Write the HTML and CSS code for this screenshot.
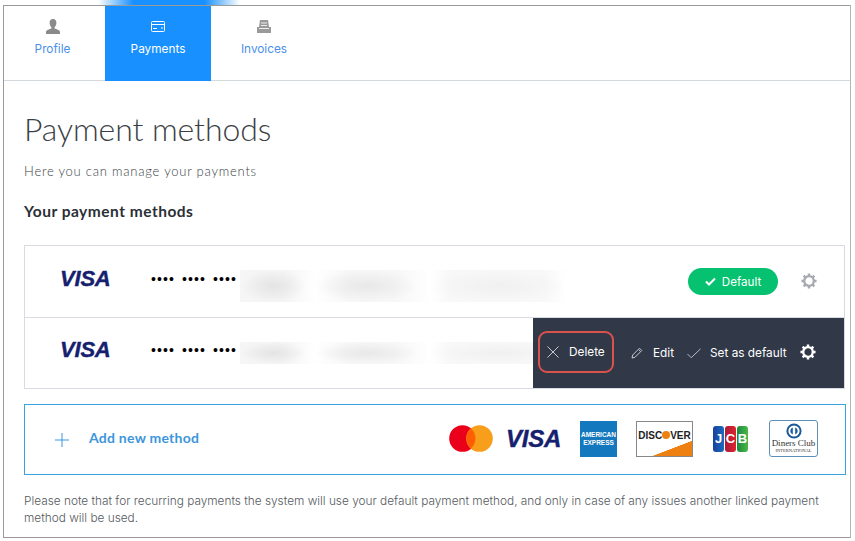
FILE: index.html
```html
<!DOCTYPE html>
<html lang="en">
    <head>
        <title>Payment methods</title>
        <meta charset="utf-8" />
        <link rel="stylesheet" href="styles.css">
    </head>
    <body>
        <div class="glow"></div>
        <div class="frame">
            <div class="tabs">
                <a class="tab first">
                    <svg width="16" height="16" viewBox="0 0 16 16"><path fill="#8a8a8a" d="M8 0c2.200 0 3.400 1.600 3.400 3.800 0 2-1 3.800-1.800 4.500v1.200c2 .8 5.400 1.400 5.400 3.500V15H1v-2c0-2.100 3.400-2.700 5.400-3.500V8.300C5.600 7.600 4.600 5.800 4.600 3.800 4.600 1.600 5.800 0 8 0z"/></svg>
                    Profile
                </a>
                <a class="tab active">
                    <svg width="16" height="16" viewBox="0 0 16 16" fill="none" stroke="#fff"><rect x="1.500" y="2.500" width="13" height="10" rx="1"/><path d="M1.500 5.500h13M3 9.500h4M11 9h2" /></svg>
                    Payments
                </a>
                <a class="tab">
                    <svg width="16" height="16" viewBox="0 0 16 16"><path fill="#9a9a9a" d="M4 1h8l1 7h2v6H1V8h2z"/><path stroke="#eee" d="M5 4h6M5 6.500h6M3 9.500h10"/></svg>
                    Invoices
                </a>
            </div>
            <div class="content">
                <h1>Payment methods</h1>
                <p class="intro">Here you can manage your payments</p>
                <h2>Your payment methods</h2>
                <div class="methods">
                    <div class="method">
                        <span class="visa">VISA</span>
                        <span class="dots">•••• •••• ••••</span>
                        <span class="blurred">
                            <i class="blur b1"></i><i class="blur b2"></i><i class="blur b3"></i>
                        </span>
                        <span class="badge">
                            <svg width="11" height="9" viewBox="0 0 11 9" fill="none" stroke="#fff" stroke-width="2"><path d="M1 4.500l3 3 6-6"/></svg>
                            Default
                        </span>
                        <svg class="gear" width="16" height="16" viewBox="0 0 18 18"><use href="#gear" /></svg>
                    </div>
                    <div class="method">
                        <span class="visa">VISA</span>
                        <span class="dots">•••• •••• ••••</span>
                        <span class="blurred thin">
                            <i class="blur b1"></i><i class="blur b2"></i><i class="blur b3"></i>
                        </span>
                        <div class="actions">
                            <a class="action delete">
                                <svg width="12" height="12" viewBox="0 0 12 12" stroke="#c4c8ce" fill="none"><path d="M.5.500l11 11M11.500.500l-11 11"/></svg>
                                Delete
                            </a>
                            <a class="action edit">
                                <svg width="12" height="12" viewBox="0 0 12 12" stroke="#c4c8ce" fill="none"><path d="M1 11l.7-3L8.500 1.200l2.300 2.300L4 10.300zM7.500 2.500l2 2"/></svg>
                                Edit
                            </a>
                            <a class="action set">
                                <svg width="14" height="11" viewBox="0 0 15 11" stroke="#c4c8ce" fill="none"><path d="M.5 6l4 4L14.500.500"/></svg>
                                Set as default
                            </a>
                            <svg class="gear light" width="16" height="16" viewBox="0 0 18 18"><use href="#gear" /></svg>
                        </div>
                    </div>
                </div>
                <div class="add">
                    <svg class="plus" width="14" height="14" viewBox="0 0 14 14" stroke="#3d95dc"><path d="M7 0v14M0 7h14"/></svg>
                    <span class="add-label">Add new method</span>
                    <div class="cards">
                        <svg width="44" height="27" viewBox="0 0 44 27"><circle cx="13.500" cy="13.500" r="13.300" fill="#eb001b"/><circle cx="30.500" cy="13.500" r="13.300" fill="#f79e1b"/><path fill="#ff5f00" d="M22 3.600a13.300 13.300 0 0 1 0 19.800 13.300 13.300 0 0 1 0-19.800z"/></svg>
                        <span class="visa big">VISA</span>
                        <span class="amex">AMERICAN<br>EXPRESS</span>
                        <span class="discover">DISC<b></b>VER</span>
                        <span class="jcb"><i class="j">J</i><i class="c">C</i><i class="b">B</i></span>
                        <span class="diners">
                            <svg width="16" height="16" viewBox="0 0 20 20"><circle cx="10" cy="10" r="9.500" fill="#1a5a9a"/><circle cx="10" cy="10" r="7" fill="#fff"/><path fill="#1a5a9a" d="M8.500 5.500v9a4.800 4.800 0 0 1 0-9zM11.500 5.500a4.800 4.800 0 0 1 0 9z"/></svg>
                            <em>Diners Club</em>
                            <small>INTERNATIONAL</small>
                        </span>
                    </div>
                </div>
                <p class="note">Please note that for recurring payments the system will use your default payment method, and only in case of any issues another linked payment method will be used.</p>
            </div>
        </div>
        <svg class="defs" width="0" height="0">
            <symbol id="gear" viewBox="0 0 18 18">
                <path fill="none" stroke="currentColor" stroke-width="2.600" d="M9 3.600a5.400 5.400 0 1 0 0 10.800 5.400 5.400 0 0 0 0-10.800z"/>
                <path fill="none" stroke="currentColor" stroke-width="2.800" d="M9 .5v3M9 14.500v3M.5 9h3M14.500 9h3M3 3l2.100 2.100M12.900 12.900L15 15M15 3l-2.100 2.100M5.100 12.900L3 15"/>
            </symbol>
        </svg>
    </body>
</html>
```

FILE: styles.css
```css
html, body {
    margin: 0px;
    padding: 0px;
    height: 541px;
    overflow: hidden;
    background: white;
    font-family: Inter, "Liberation Sans", sans-serif;
    color: #2b2f36;
}
.glow {
    position: absolute;
    top: 0px;
    left: 98px;
    width: 142px;
    height: 5px;
    background: linear-gradient(90deg, #ffffff 0%, #1890ff 25%, #1890ff 75%, #ffffff 100%);
}
.frame {
    position: absolute;
    top: 5px;
    left: 3px;
    width: 848px;
    height: 533px;
    border: 1px solid #9a9a9a;
    border-right-color: #b5b5b5;
    box-sizing: border-box;
}
.tabs {
    display: flex;
    height: 75px;
    border-bottom: 1px solid #d3d9dc;
    box-sizing: border-box;
}
.tab {
    display: flex;
    flex-direction: column;
    align-items: center;
    width: 106px;
    height: 75px;
    padding-top: 13px;
    box-sizing: border-box;
    gap: 7px;
    color: #4a90e8;
    font-size: 11.800px;
}
.first {
    width: 97px;
    margin-right: 4px;
}
.tab svg {
    display: block;
}
.active {
    background: #1890ff;
    color: white;
}
.content {
    padding: 0px 6px 0px 20px;
}
h1 {
    margin: 0px;
    padding-top: 30px;
    line-height: 36px;
    font-family: Lato, sans-serif;
    font-size: 32px;
    font-weight: 300;
    letter-spacing: -0.100px;
    color: #3b3f45;
}
.intro {
    margin: 16px 0px 0px;
    line-height: 16px;
    font-family: Lato, sans-serif;
    font-size: 13px;
    font-weight: 300;
    letter-spacing: 0.770px;
    color: #3b3f45;
}
h2 {
    margin: 24px 0px 0px;
    line-height: 16px;
    font-family: Lato, sans-serif;
    font-size: 15.500px;
    font-weight: 700;
    letter-spacing: 0.500px;
}
.methods {
    margin-top: 26px;
    border: 1px solid #d9dbe3;
    width: 821px;
    box-sizing: border-box;
}
.method {
    position: relative;
    display: flex;
    align-items: center;
    height: 71px;
    padding-left: 35px;
    box-sizing: border-box;
}
.method + .method {
    border-top: 1px solid #d9dbe3;
}
.visa {
    width: 91px;
    margin-top: -6px;
    color: #15206e;
    font-family: "Liberation Sans", sans-serif;
    font-size: 22px;
    font-weight: bold;
    font-style: italic;
    letter-spacing: -0.200px;
    -webkit-text-stroke: 0.4px #15206e;
}
.dots {
    width: 89px;
    margin-top: -6px;
    color: black;
    font-family: "Liberation Sans", sans-serif;
    font-size: 14px;
    letter-spacing: 1.100px;
    word-spacing: 2px;
    white-space: pre;
}
.blurred {
    display: flex;
    flex: none;
    width: 326px;
    height: 32px;
    margin-top: 9px;
}
.thin {
    height: 22px;
    margin-top: 0px;
}
.blur {
    display: block;
    height: 100%;
}
.b1 {
    width: 75px;
    background: radial-gradient(ellipse closest-side at 44% 50%, #e4e4e4, transparent),
        linear-gradient(90deg, #f6f6f6, #f4f4f4 60%, #ffffff);
}
.b2 {
    width: 115px;
    background: radial-gradient(ellipse closest-side at 45% 50%, #e8e8e8, transparent),
        linear-gradient(90deg, #ffffff, #f7f7f7 30%, #f7f7f7 70%, #ffffff);
}
.b3 {
    width: 136px;
    background: radial-gradient(ellipse closest-side, #f0f0f0, transparent),
        linear-gradient(90deg, #ffffff, #f8f8f8 15%, #f8f8f8 85%, #ffffff);
}
.badge {
    position: absolute;
    top: 22px;
    right: 66px;
    display: flex;
    align-items: center;
    justify-content: center;
    gap: 6px;
    width: 90px;
    height: 27px;
    border-radius: 14px;
    background: #06c270;
    color: white;
    font-size: 11.600px;
}
.gear {
    position: absolute;
    top: 27px;
    right: 27px;
    color: #a7abb0;
}
.actions {
    position: absolute;
    top: 0px;
    right: 0px;
    bottom: 0px;
    display: flex;
    align-items: center;
    width: 311px;
    background: #313848;
    color: white;
    font-size: 11.800px;
}
.action {
    display: flex;
    align-items: center;
    gap: 9px;
}
.delete {
    gap: 10px;
    margin: -2px 17px 0px 5px;
    padding: 0px 7px;
    width: 76px;
    height: 42px;
    border: 2px solid #d9534a;
    border-radius: 9px;
    box-sizing: border-box;
}
.edit {
    margin-right: 13px;
    gap: 10px;
}
.light {
    color: white;
    top: 26px;
    right: 28px;
}
.add {
    display: flex;
    align-items: center;
    margin-top: 15px;
    padding-left: 30px;
    width: 822px;
    height: 71px;
    border: 1px solid #3aa2dd;
    box-sizing: border-box;
}
.add-label {
    margin: -4px 0px 0px 20px;
    color: #3d95dc;
    font-family: Lato, sans-serif;
    font-size: 14px;
    font-weight: 700;
    letter-spacing: 0.250px;
}
.cards {
    display: flex;
    align-items: center;
    gap: 19px;
    margin-left: auto;
    margin-right: 27px;
    margin-top: -2px;
}
.big {
    width: 56px;
    margin: 0px -1px 0px -6px;
    font-size: 24px;
}
.amex {
    width: 37px;
    height: 36px;
    background: #1478be;
    color: white;
    font-family: "Liberation Sans", sans-serif;
    font-size: 6.500px;
    font-weight: bold;
    line-height: 8px;
    padding-top: 10px;
    box-sizing: border-box;
    text-align: center;
    white-space: nowrap;
}
.discover {
    width: 57px;
    height: 36px;
    border: 1px solid #888888;
    box-sizing: border-box;
    background: linear-gradient(159deg, white 72%, #ee8012 73%);
    color: #222222;
    font-family: "Liberation Sans", sans-serif;
    font-size: 10px;
    font-weight: bold;
    line-height: 28px;
    text-align: center;
}
.discover b {
    display: inline-block;
    width: 8px;
    height: 8px;
    border-radius: 50%;
    background: #ee8012;
}
.jcb {
    display: flex;
    gap: 1px;
    width: 35px;
    height: 26px;
    margin-left: 1px;
    margin-right: 2px;
}
.jcb i {
    flex: 1;
    border-radius: 3px;
    color: white;
    font-family: "Liberation Sans", sans-serif;
    font-size: 13px;
    font-weight: bold;
    font-style: normal;
    line-height: 26px;
    text-align: center;
}
.j { background: linear-gradient(90deg, #1a3f9c, #1a6cc0); }
.c { background: linear-gradient(90deg, #a81c3a, #e0242f); }
.b { background: linear-gradient(90deg, #1a8a3f, #4cb848); }
.diners {
    display: flex;
    flex-direction: column;
    align-items: center;
    width: 49px;
    height: 37px;
    padding-top: 2px;
    border: 1px solid #5b8fb8;
    border-radius: 3px;
    box-sizing: border-box;
    color: #333333;
    white-space: nowrap;
}
.diners em {
    font-family: "Liberation Serif", serif;
    font-size: 9px;
    font-style: normal;
    line-height: 9px;
}
.diners small {
    font-family: "Liberation Serif", serif;
    font-size: 4.500px;
    line-height: 5px;
}
.note {
    margin: 18px 0px 0px;
    line-height: 17px;
    font-size: 11.830px;
    font-weight: 300;
    color: #555a60;
}
.defs {
    position: absolute;
}
```
